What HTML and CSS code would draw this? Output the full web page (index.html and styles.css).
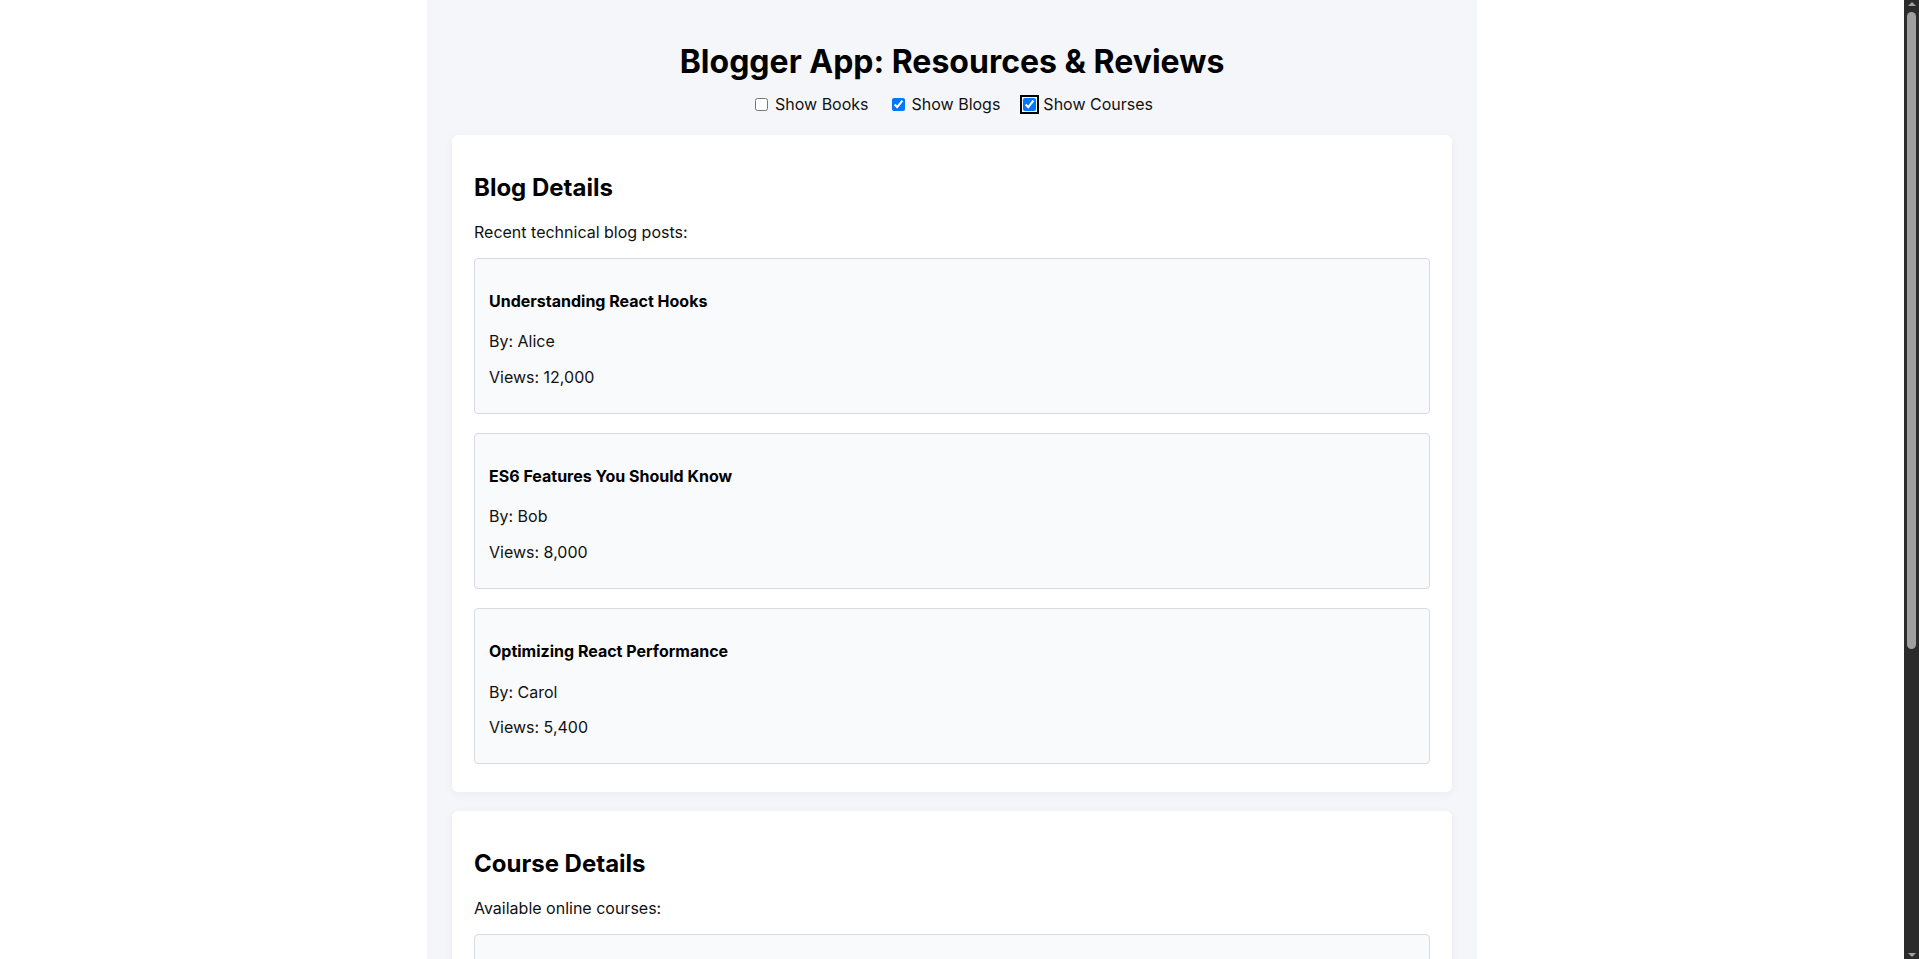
FILE: index.html
```html
<!DOCTYPE html>
<html lang="en">
<head>
<meta charset="utf-8">
<title>Blogger App</title>
<link rel="stylesheet" href="styles.css">
</head>
<body>
<div class="app">
  <h1 class="app-title">Blogger App: Resources &amp; Reviews</h1>
  <div class="toggles">
    <label class="toggle"><input type="checkbox"> Show Books</label>
    <label class="toggle"><input type="checkbox" checked> Show Blogs</label>
    <label class="toggle"><input type="checkbox" class="focused" checked> Show Courses</label>
  </div>

  <section class="card">
    <h2 class="card-title">Blog Details</h2>
    <p class="card-intro">Recent technical blog posts:</p>
    <div class="item">
      <h4 class="item-title">Understanding React Hooks</h4>
      <p class="item-line">By: Alice</p>
      <p class="item-line">Views: 12,000</p>
    </div>
    <div class="item">
      <h4 class="item-title">ES6 Features You Should Know</h4>
      <p class="item-line">By: Bob</p>
      <p class="item-line">Views: 8,000</p>
    </div>
    <div class="item">
      <h4 class="item-title">Optimizing React Performance</h4>
      <p class="item-line">By: Carol</p>
      <p class="item-line">Views: 5,400</p>
    </div>
  </section>

  <section class="card">
    <h2 class="card-title">Course Details</h2>
    <p class="card-intro">Available online courses:</p>
    <div class="item">
      <h4 class="item-title">React for Beginners</h4>
      <p class="item-line">Instructor: John Smith</p>
      <p class="item-line">Duration: 6 weeks</p>
      <p class="item-line">Level: Beginner</p>
    </div>
    <div class="item">
      <h4 class="item-title">Advanced JavaScript</h4>
      <p class="item-line">Instructor: Jane Doe</p>
      <p class="item-line">Duration: 8 weeks</p>
      <p class="item-line">Level: Advanced</p>
    </div>
  </section>
</div>

<div class="scrollbar" aria-hidden="true">
  <span class="sb-arrow sb-up"></span>
  <div class="sb-track"><div class="sb-thumb"></div></div>
  <span class="sb-arrow sb-down"></span>
</div>
</body>
</html>
```

FILE: styles.css
```css
html, body {
  margin: 0;
  padding: 0;
  background: #ffffff;
}

body {
  font-family: Inter, "Noto Sans", "Liberation Sans", sans-serif;
  font-size: 16px;
  color: #111111;
  margin-right: 15px;
}

.app {
  width: 1050px;
  margin: 0 auto;
  box-sizing: border-box;
  padding: 42px 25px 36px;
  background: #f5f6fa;
}

.app-title {
  margin: 0;
  font-size: 32px;
  font-weight: 700;
  text-align: center;
  color: #000;
}

.toggles {
  display: flex;
  justify-content: center;
  align-items: center;
  margin-top: 13px;
  gap: 19px;
}

.toggle {
  font-size: 16px;
  color: #111;
  display: inline-flex;
  align-items: center;
}

.toggle input {
  margin: 3px 7px 3px 4px;
  width: 13px;
  height: 13px;
}

.toggle input.focused {
  outline: 2px solid #000;
  outline-offset: 1px;
  border-radius: 2px;
}

.card {
  background: #ffffff;
  border-radius: 6px;
  box-shadow: 0 2px 10px rgba(20, 30, 60, 0.05);
  padding: 22px 22px 28px;
  margin-top: 21px;
}

.card + .card {
  margin-top: 19px;
}

.card-title {
  margin: 16px 0 20px;
  font-size: 24px;
  font-weight: 700;
  color: #000;
}

.card-intro {
  margin: 0 0 16px;
  color: #111;
}

.item {
  background: #f9fafb;
  border: 1px solid #d8dadf;
  border-radius: 4px;
  padding: 12px 14px 10px;
  line-height: 1.21;
}

.item + .item {
  margin-top: 19px;
}

.item-title {
  margin: 21px 0 21px;
  font-size: 16px;
  font-weight: 700;
  color: #000;
}

.item-line {
  margin: 0 0 16px;
  color: #111;
}

/* window scrollbar as seen in the reference */
.scrollbar {
  position: fixed;
  top: 0;
  right: 0;
  width: 15px;
  height: 100vh;
  background: #2b2b2b;
  display: flex;
  flex-direction: column;
  align-items: center;
}

.sb-arrow {
  width: 0;
  height: 0;
  border-left: 4px solid transparent;
  border-right: 4px solid transparent;
  flex: none;
}

.sb-up {
  border-bottom: 4px solid #a3a3a3;
  margin: 2px 0 3px;
}

.sb-down {
  border-top: 4px solid #a3a3a3;
  margin: 3px 0 2px;
}

.sb-track {
  flex: 1;
  width: 100%;
  display: flex;
  justify-content: center;
}

.sb-thumb {
  width: 9px;
  height: 637px;
  margin-top: 3px;
  background: #9f9f9f;
  border-radius: 5px;
}
```
